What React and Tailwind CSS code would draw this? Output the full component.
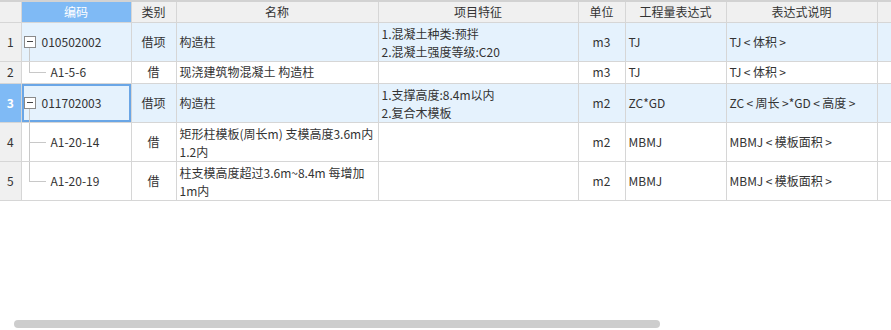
import React from "react";

const cols = [
  { key: "no", w: 21 },
  { key: "code", w: 110, title: "编码" },
  { key: "cat", w: 45, title: "类别" },
  { key: "name", w: 202, title: "名称" },
  { key: "feat", w: 200, title: "项目特征" },
  { key: "unit", w: 47, title: "单位" },
  { key: "expr", w: 101, title: "工程量表达式" },
  { key: "desc", w: 151, title: "表达式说明" },
  { key: "pad", w: 14, title: "" },
];

const rows = [
  {
    no: 1,
    level: 0,
    code: "010502002",
    cat: "借项",
    name: ["构造柱"],
    feat: ["1.混凝土种类:预拌", "2.混凝土强度等级:C20"],
    unit: "m3",
    expr: "TJ",
    desc: "TJ<体积>",
    h: 39,
  },
  {
    no: 2,
    level: 1,
    last: true,
    code: "A1-5-6",
    cat: "借",
    name: ["现浇建筑物混凝土 构造柱"],
    feat: [],
    unit: "m3",
    expr: "TJ",
    desc: "TJ<体积>",
    h: 22,
  },
  {
    no: 3,
    level: 0,
    selected: true,
    code: "011702003",
    cat: "借项",
    name: ["构造柱"],
    feat: ["1.支撑高度:8.4m以内", "2.复合木模板"],
    unit: "m2",
    expr: "ZC*GD",
    desc: "ZC<周长>*GD<高度>",
    h: 39,
  },
  {
    no: 4,
    level: 1,
    code: "A1-20-14",
    cat: "借",
    name: ["矩形柱模板(周长m) 支模高度3.6m内", "1.2内"],
    feat: [],
    unit: "m2",
    expr: "MBMJ",
    desc: "MBMJ<模板面积>",
    h: 39,
  },
  {
    no: 5,
    level: 1,
    last: true,
    code: "A1-20-19",
    cat: "借",
    name: ["柱支模高度超过3.6m~8.4m 每增加", "1m内"],
    feat: [],
    unit: "m2",
    expr: "MBMJ",
    desc: "MBMJ<模板面积>",
    h: 39,
  },
];

// angle brackets in the expression notes are drawn with a little air around them
const spaced = (s) => s.replace(/</g, "\u2009<\u2009").replace(/>/g, "\u2009>");

function CodeCell({ row }) {
  if (row.level === 0) {
    return (
      <div className="relative h-full flex items-center">
        <span className="relative z-10 ml-[2px] w-[12px] h-[12px] border border-[#8a8a8a] bg-white flex items-center justify-center">
          <span className="block w-[6px] h-px bg-[#444]" />
        </span>
        {/* trunk line down to the children */}
        <span className="absolute left-[7px] top-1/2 mt-[6px] bottom-0 w-px bg-[#c8c8c8]" />
        <span className="ml-[6px]">{row.code}</span>
      </div>
    );
  }
  return (
    <div className="relative h-full flex items-center">
      <span
        className={`absolute left-[7px] top-0 w-px bg-[#c8c8c8] ${row.last ? "h-1/2" : "h-full"}`}
      />
      <span className="absolute left-[7px] top-1/2 w-[17px] h-px bg-[#c8c8c8]" />
      <span className="ml-[29px]">{row.code}</span>
    </div>
  );
}

export default function App() {
  return (
    <div
      className="w-[891px] h-[330px] bg-white flex flex-col text-[12px] text-[#333] overflow-hidden"
      style={{ fontFamily: '"Noto Sans CJK SC", "Noto Sans", sans-serif' }}
    >
      <div className="h-[2px] bg-[#d2d2d2]" />
      <table className="table-fixed border-collapse w-[891px] leading-[18px]">
        <colgroup>
          {cols.map((c) => (
            <col key={c.key} style={{ width: c.w }} />
          ))}
        </colgroup>
        <thead>
          <tr className="h-[20px]">
            {cols.map((c) =>
              c.key === "code" ? (
                <th
                  key={c.key}
                  className="font-normal text-white bg-[#7fbaf5] border border-[#d6d6d6] border-t-0 p-0"
                >
                  {c.title}
                </th>
              ) : (
                <th
                  key={c.key}
                  className="font-normal bg-[#f0f0f0] border border-[#d6d6d6] border-t-0 p-0 first:border-l-0 last:border-r-0"
                >
                  {c.title}
                </th>
              )
            )}
          </tr>
        </thead>
        <tbody>
          {rows.map((r) => {
            const tint = r.level === 0 ? "bg-[#e5f2fd]" : "bg-white";
            const cell = `border border-[#d6d6d6] p-0 ${tint}`;
            return (
              <tr key={r.no} style={{ height: r.h }}>
                <td
                  className={`border border-[#d6d6d6] border-l-0 p-0 text-center ${
                    r.selected ? "bg-[#7fbaf5] text-white font-bold" : "bg-[#f0f0f0]"
                  }`}
                >
                  {r.no}
                </td>
                <td
                  className={`${cell} ${
                    r.selected ? "shadow-[inset_0_0_0_2px_#6aa6e6]" : ""
                  }`}
                  style={{ height: r.h }}
                >
                  <CodeCell row={r} />
                </td>
                <td className={`${cell} text-center`}>{r.cat}</td>
                <td className={`${cell} px-[3px] ${r.name.length > 1 ? "align-top pt-[2px]" : ""}`}>
                  {r.name.map((t) => (
                    <div key={t} className="whitespace-nowrap">
                      {t}
                    </div>
                  ))}
                </td>
                <td className={`${cell} px-[3px] align-top pt-[2px]`}>
                  {r.feat.map((t) => (
                    <div key={t}>{t}</div>
                  ))}
                </td>
                <td className={`${cell} text-center`}>{r.unit}</td>
                <td className={`${cell} px-[3px]`}>{r.expr}</td>
                <td className={`${cell} px-[3px] whitespace-nowrap`}>{spaced(r.desc)}</td>
                <td className={`${cell} border-r-0`} />
              </tr>
            );
          })}
        </tbody>
      </table>
      <div className="mt-auto mb-[2px] ml-[14px] w-[646px] h-[8px] rounded-full bg-[#cdcdcd]" />
    </div>
  );
}
